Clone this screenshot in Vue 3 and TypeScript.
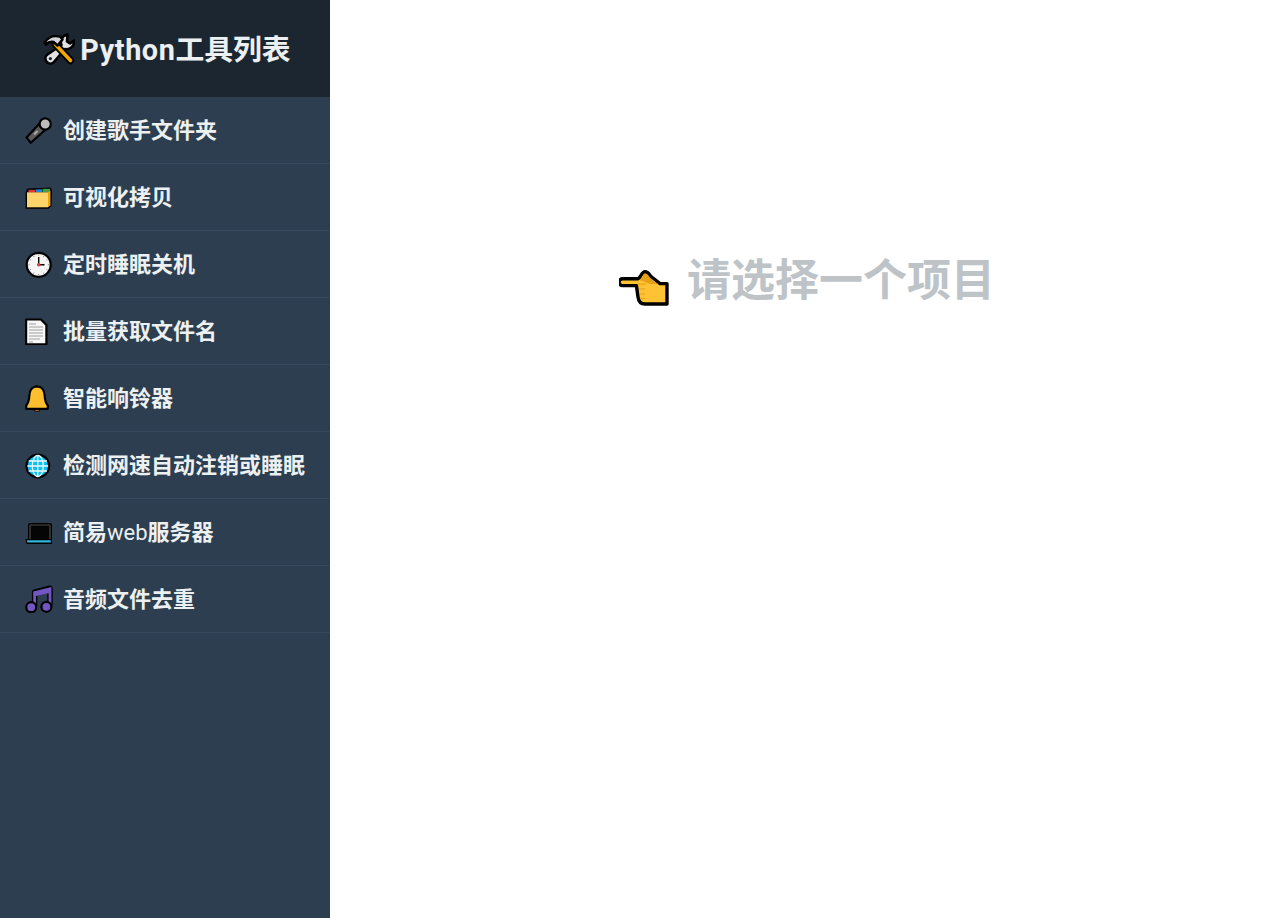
<script setup lang="ts">
interface Tool {
  icon: string
  before: string
  latin?: string
  after?: string
}

const tools: Tool[] = [
  { icon: 'mic', before: '创建歌手文件夹' },
  { icon: 'folder', before: '可视化拷贝' },
  { icon: 'clock', before: '定时睡眠关机' },
  { icon: 'doc', before: '批量获取文件名' },
  { icon: 'bell', before: '智能响铃器' },
  { icon: 'globe', before: '检测网速自动注销或睡眠' },
  { icon: 'laptop', before: '简易', latin: 'web', after: '服务器' },
  { icon: 'music', before: '音频文件去重' }
]
</script>

<template>
  <div class="page">
    <aside class="sidebar">
      <header class="brand">
        <svg class="brand-icon" viewBox="0 0 32 32" aria-hidden="true">
          <path d="M24.5 1.5 A7.5 7.5 0 0 0 18.5 12 L4.5 21.5 A5 5 0 0 0 10.5 29.5 L22 16 A7.5 7.5 0 0 0 31 7.5 L27 10.5 L24 8.5 Z" fill="#e2e2e2" stroke="#000" stroke-width="2.6" stroke-linejoin="round" />
          <circle cx="7.4" cy="25.6" r="1.6" fill="#1c2630" />
          <path d="M12.5 11.5 L27.5 27.5" stroke="#000" stroke-width="7.4" stroke-linecap="round" />
          <path d="M12.5 11.5 L27.5 27.5" stroke="#f2a600" stroke-width="3.6" stroke-linecap="round" />
          <path d="M1.8 9.5 C5 4 11 2 17 3.5 L19.5 6.5 L14.5 12.5 L10.5 9 C8 8.5 5 9.5 3 11.5 Z" fill="#d6d6d6" stroke="#000" stroke-width="2.6" stroke-linejoin="round" />
        </svg>
        <h1 class="brand-title"><span class="brand-latin">Python</span>工具列表</h1>
      </header>

      <ul class="tool-list">
        <li v-for="tool in tools" :key="tool.before" class="tool-row">
          <svg class="tool-icon" viewBox="0 0 28 28" aria-hidden="true">
            <template v-if="tool.icon === 'mic'">
              <path d="M14.5 7.5 L1.6 21.6 L5.8 26.8 L20.8 13.4 Z" fill="#5a5a5a" stroke="#000" stroke-width="2.2" stroke-linejoin="round" />
              <path d="M12.5 15 L9 18.5" stroke="#a5a5a5" stroke-width="2.2" />
              <circle cx="20.2" cy="8" r="5.6" fill="#bdbdbd" stroke="#000" stroke-width="2.2" />
            </template>
            <template v-else-if="tool.icon === 'folder'">
              <path d="M.6 9 L2.6 5.6 L26 4.6 L27 8 L26.6 23 L23.5 25.8 L.6 25.8 Z" fill="#000" />
              <path d="M3.5 6.8 H10 V9.3 H3.5 Z" fill="#e53935" />
              <path d="M10.5 6.4 H17 V9.3 H10.5 Z" fill="#1e88e5" />
              <path d="M17.5 5.8 H25 V9.3 H17.5 Z" fill="#43a047" />
              <path d="M2 9.3 H23 V24.3 H2 Z" fill="#ffd56b" />
              <path d="M23 9.3 L25.4 7.5 V22.5 L23 24.3 Z" fill="#f2a600" />
            </template>
            <template v-else-if="tool.icon === 'clock'">
              <circle cx="13.7" cy="14.8" r="12" fill="#f5f5f5" stroke="#000" stroke-width="2.2" />
              <path d="M13.7 7 V14.8 H19.5" fill="none" stroke="#000" stroke-width="1.4" />
              <circle cx="13.7" cy="14.8" r="1.8" fill="#e53935" />
              <path d="M13.7 4.5 V5.6 M13.7 24 V25 M3.5 14.8 H4.6 M22.8 14.8 H24 M8.6 6 L9.1 7 M18.8 6 L18.3 7 M8.6 23.6 L9.1 22.6 M18.8 23.6 L18.3 22.6 M5 9.7 L6 10.2 M22.4 9.7 L21.4 10.2 M5 19.9 L6 19.4 M22.4 19.9 L21.4 19.4" stroke="#888" stroke-width="1" />
            </template>
            <template v-else-if="tool.icon === 'doc'">
              <path d="M1.1 2.5 H16 L21.4 8 V27.4 H1.1 Z" fill="#f7f7f7" stroke="#000" stroke-width="2.2" stroke-linejoin="round" />
              <path d="M4 7 H11 M4 10 H18 M4 13 H18 M4 16 H18 M4 19 H18 M4 22 H15 M4 25 H8" stroke="#a0a0a0" stroke-width="1.1" />
            </template>
            <template v-else-if="tool.icon === 'bell'">
              <path d="M8.5 24 H15.5 L13.8 27.8 H10.2 Z" fill="#8d5a2b" stroke="#000" stroke-width=".8" />
              <path d="M12 2.4 C5.5 2.6 4.6 7.5 4.3 12 C4 17 3.2 19.4 1.2 21.6 V24.8 H22.8 V21.6 C20.8 19.4 20 17 19.7 12 C19.4 7.5 18.5 2.6 12 2.4 Z" fill="#fcc02e" stroke="#000" stroke-width="2.2" stroke-linejoin="round" />
            </template>
            <template v-else-if="tool.icon === 'globe'">
              <circle cx="12.8" cy="15" r="11.3" fill="#10bff2" stroke="#000" stroke-width="2.2" />
              <ellipse cx="12.8" cy="15" rx="5.5" ry="10.6" fill="none" stroke="#e8fbff" stroke-width="1.3" />
              <path d="M12.8 4.4 V25.6 M2.4 15 H23.2 M3.6 10 H22 M3.6 20 H22" fill="none" stroke="#e8fbff" stroke-width="1.3" />
            </template>
            <template v-else-if="tool.icon === 'laptop'">
              <rect x="3" y="5" width="24" height="18" rx="2" fill="#000" />
              <rect x="5" y="7" width="20" height="15" rx=".6" fill="#050505" stroke="#4d4d4d" stroke-width="1.2" />
              <path d="M.4 21 H27 V25.9 H1.6 Z" fill="#000" />
              <path d="M1.8 22.2 H25.8 V24.6 H2.4 Z" fill="#2fb4dc" />
            </template>
            <template v-else-if="tool.icon === 'music'">
              <path d="M9.6 21 V7 L25 3.2 V20" fill="none" stroke="#000" stroke-width="5.4" stroke-linejoin="round" />
              <path d="M9.6 21 V7.6 L25 3.9 V20 M9.6 10 L25 6.4" fill="none" stroke="#7455c4" stroke-width="2.8" />
              <circle cx="6.2" cy="22.2" r="5" fill="#7455c4" stroke="#000" stroke-width="2.2" />
              <circle cx="21.4" cy="21.8" r="5" fill="#7455c4" stroke="#000" stroke-width="2.2" />
            </template>
          </svg>
          <span class="tool-label">{{ tool.before }}<span v-if="tool.latin" class="tool-latin">{{ tool.latin }}</span>{{ tool.after }}</span>
        </li>
      </ul>
    </aside>

    <main class="content">
      <div class="placeholder">
        <svg class="hand" viewBox="0 0 50 36" aria-hidden="true">
          <path d="M3.5 8.8 H19 C22 7.5 22.5 2 26 1.8 C29 1.8 30 4 32 6.5 L41 13.6 H48 V34 H26 C21.5 34 19.5 31 19 27 L17.4 15.6 H3.5 A3.4 3.4 0 0 1 3.5 8.8 Z" fill="#ffc234" stroke="#000" stroke-width="3.4" stroke-linejoin="round" />
          <path d="M21 10.4 C23 8 24 3.8 26 3.6 C28 3.6 29 5 31 7.7 L39 14 H31 L24 11 Z" fill="#e6a016" />
          <path d="M19 14 H27 M20 19 H26 M20.6 24 H26 M21.5 28.5 H26" stroke="#e6a016" stroke-width="1.2" />
        </svg>
        <h2 class="placeholder-text">请选择一个项目</h2>
      </div>
    </main>
  </div>
</template>

<style>
html,
body {
  margin: 0;
  padding: 0;
}
</style>

<style scoped>
.page {
  display: flex;
  min-height: 918px;
  font-family: Roboto, "Noto Sans CJK SC", sans-serif;
  background: #fff;
}

.sidebar {
  flex: 0 0 330px;
  background: #2c3e50;
}

.brand {
  height: 97px;
  box-sizing: border-box;
  display: flex;
  align-items: center;
  justify-content: center;
  gap: 5px;
  padding-left: 4px;
  background: #1c2630;
}

.brand-icon {
  width: 32px;
  height: 32px;
  flex: none;
}

.brand-title {
  margin: 0;
  padding-top: 2px;
  font-size: 28.8px;
  font-weight: 700;
  line-height: 40px;
  color: #ecf0f1;
}

.brand-latin {
  letter-spacing: 0.6px;
}

.tool-list {
  list-style: none;
  margin: 0;
  padding: 0;
}

.tool-row {
  height: 67px;
  box-sizing: border-box;
  display: flex;
  align-items: center;
  gap: 10px;
  padding-left: 25px;
  border-bottom: 1px solid #34495e;
}

.tool-icon {
  width: 28px;
  height: 28px;
  flex: none;
}

.tool-label {
  font-size: 22px;
  font-weight: 700;
  line-height: 30px;
  padding-top: 2px;
  color: #ecf0f1;
  white-space: nowrap;
}

.tool-latin {
  font-weight: 400;
}

.content {
  flex: 1;
  display: flex;
  justify-content: center;
  padding-top: 250px;
  padding-left: 6px;
}

.placeholder {
  display: flex;
  align-items: flex-start;
  gap: 18px;
  height: 60px;
}

.hand {
  width: 50px;
  height: 36px;
  flex: none;
  margin-top: 20px;
}

.placeholder-text {
  margin: 1px 0 0;
  font-size: 44px;
  font-weight: 700;
  line-height: 60px;
  color: #bdc3c7;
  white-space: nowrap;
}
</style>
